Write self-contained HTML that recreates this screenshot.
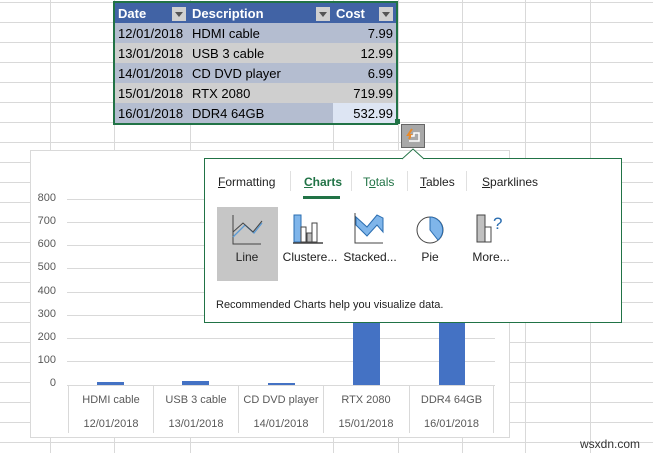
<!DOCTYPE html>
<html><head><meta charset="utf-8"><style>
*{margin:0;padding:0;box-sizing:border-box}
body{width:653px;height:453px;overflow:hidden;background:#fff;font-family:"Liberation Sans",sans-serif;position:relative}
.abs{position:absolute}
.grid{position:absolute;inset:0;background-image:linear-gradient(#d9d9d9 1px,transparent 1px);background-size:100% 20px;background-position:0 2px}
.vl{position:absolute;top:0;bottom:0;width:1px;background:#d9d9d9}
table{border-collapse:collapse;font-size:13px}
td{height:20px;padding:0 3px;white-space:nowrap}
.t{color:#fff;font-weight:bold;background:#4163a5}
.dd{display:inline-block;width:14px;height:14px;background:#d0d0d0;vertical-align:middle;position:relative;float:right;margin-top:1px}
.dd:after{content:"";position:absolute;left:3px;top:5px;border:4px solid transparent;border-top:5px solid #555}
.r1{background:#b4bdd0}.r2{background:#cfcfcf}
.ax{position:absolute;left:30px;width:26px;text-align:right;font-size:11px;color:#595959}
.gl{position:absolute;left:67px;width:428px;height:1px;background:#d9d9d9}
.cat{position:absolute;top:386px;width:85px;height:47px;border-left:1px solid #d9d9d9;text-align:center;font-size:11px;color:#595959}
.tab{position:absolute;top:175px;font-size:12px;color:#222}
.ic{position:absolute;top:212px;width:48px;text-align:center;font-size:12px;color:#222}
</style></head><body>
<div class="grid"></div>
<div class="vl" style="left:50px"></div><div class="vl" style="left:114px"></div><div class="vl" style="left:190px"></div><div class="vl" style="left:333px"></div><div class="vl" style="left:398px"></div><div class="vl" style="left:462px"></div><div class="vl" style="left:525px"></div><div class="vl" style="left:590px"></div>

<div class="abs" style="left:113px;top:1px;width:285px;border:2px solid #217346;background:#fff">
<table style="width:281px">
<tr class="t"><td style="width:74px">Date<span class="dd"></span></td><td style="width:144px">Description<span class="dd"></span></td><td>Cost<span class="dd"></span></td></tr>
<tr class="r1"><td>12/01/2018</td><td>HDMI cable</td><td style="text-align:right">7.99</td></tr>
<tr class="r2"><td>13/01/2018</td><td>USB 3 cable</td><td style="text-align:right">12.99</td></tr>
<tr class="r1"><td>14/01/2018</td><td>CD DVD player</td><td style="text-align:right">6.99</td></tr>
<tr class="r2"><td>15/01/2018</td><td>RTX 2080</td><td style="text-align:right">719.99</td></tr>
<tr class="r1"><td>16/01/2018</td><td>DDR4 64GB</td><td style="text-align:right;background:#dde5f3">532.99</td></tr>
</table></div>
<div class="abs" style="left:395px;top:119px;width:5px;height:5px;background:#217346"></div>

<div class="abs" style="left:30px;top:150px;width:480px;height:288px;background:#fff;border:1px solid #d9d9d9"></div>
<div class="ax" style="top:192px">800</div><div class="ax" style="top:215px">700</div><div class="ax" style="top:238px">600</div><div class="ax" style="top:261px">500</div><div class="ax" style="top:285px">400</div><div class="ax" style="top:308px">300</div><div class="ax" style="top:331px">200</div><div class="ax" style="top:354px">100</div><div class="ax" style="top:377px">0</div>
<div class="gl" style="top:199px"></div><div class="gl" style="top:222px"></div><div class="gl" style="top:245px"></div><div class="gl" style="top:268px"></div><div class="gl" style="top:292px"></div><div class="gl" style="top:315px"></div><div class="gl" style="top:338px"></div><div class="gl" style="top:361px"></div>
<div class="abs" style="left:67px;top:385px;width:428px;height:1px;background:#d9d9d9"></div>
<div class="abs" style="left:97px;top:382px;width:27px;height:3px;background:#4472c4"></div>
<div class="abs" style="left:182px;top:381px;width:27px;height:4px;background:#4472c4"></div>
<div class="abs" style="left:268px;top:383px;width:27px;height:2px;background:#4472c4"></div>
<div class="abs" style="left:353px;top:218px;width:27px;height:167px;background:#4472c4"></div>
<div class="abs" style="left:439px;top:262px;width:26px;height:123px;background:#4472c4"></div>
<div class="cat" style="left:68px"><div style="margin-top:8px">HDMI cable</div><div style="margin-top:12px">12/01/2018</div></div>
<div class="cat" style="left:153px"><div style="margin-top:8px">USB 3 cable</div><div style="margin-top:12px">13/01/2018</div></div>
<div class="cat" style="left:238px"><div style="margin-top:8px">CD DVD player</div><div style="margin-top:12px">14/01/2018</div></div>
<div class="cat" style="left:323px"><div style="margin-top:8px">RTX 2080</div><div style="margin-top:12px">15/01/2018</div></div>
<div class="cat" style="left:409px;border-right:1px solid #d9d9d9"><div style="margin-top:8px">DDR4 64GB</div><div style="margin-top:12px">16/01/2018</div></div>

<div class="abs" style="left:401px;top:124px;width:24px;height:24px;background:#a8a8a8;border:1px solid #666"></div>
<svg class="abs" style="left:401px;top:124px" width="24" height="24"><path d="M11 5 L7 11 L10 11 L8 15" stroke="#e88a2a" stroke-width="2" fill="none"/><path d="M8 17h10v-8h-5v3h-3" stroke="#fff" stroke-width="1.5" fill="none"/></svg>

<div class="abs" style="left:204px;top:158px;width:418px;height:165px;background:#fff;border:1px solid #217346"></div>
<svg class="abs" style="left:402px;top:148px" width="24" height="12"><path d="M0 11 L11 1 L22 11" fill="#fff" stroke="#217346"/><rect x="1" y="10.5" width="20" height="2" fill="#fff"/></svg>
<div class="tab" style="left:218px"><u>F</u>ormatting</div>
<div class="tab" style="left:304px;color:#217346;font-weight:bold"><u>C</u>harts</div>
<div class="abs" style="left:303px;top:196px;width:37px;height:3px;background:#217346"></div>
<div class="tab" style="left:363px;color:#217346">T<u>o</u>tals</div>
<div class="tab" style="left:420px"><u>T</u>ables</div>
<div class="tab" style="left:482px"><u>S</u>parklines</div>
<div class="abs" style="left:290px;top:171px;width:1px;height:20px;background:#e0e0e0"></div>
<div class="abs" style="left:351px;top:171px;width:1px;height:20px;background:#e0e0e0"></div>
<div class="abs" style="left:407px;top:171px;width:1px;height:20px;background:#e0e0e0"></div>
<div class="abs" style="left:466px;top:171px;width:1px;height:20px;background:#e0e0e0"></div>
<div class="abs" style="left:217px;top:207px;width:61px;height:74px;background:#c6c6c6"></div>
<svg class="abs" style="left:210px;top:205px" width="310" height="40">
<path d="M23 10v29h28" stroke="#444" fill="none"/><path d="M23 32l12-12 9 8 8-10" stroke="#5b9bd5" stroke-width="1.3" fill="none"/><path d="M23 27l10-9 10 9 9-11" stroke="#444" fill="none"/>
<rect x="84" y="10" width="7" height="27" fill="#7fb5ea" stroke="#2a6db0"/><rect x="91" y="22" width="5" height="15" fill="#fff" stroke="#444"/><rect x="97" y="28" width="5" height="9" fill="#bbb" stroke="#444"/><rect x="102" y="18" width="5" height="19" fill="#fff" stroke="#444"/><path d="M83 38h30" stroke="#444" stroke-width="1.5"/>
<path d="M146 12L157 22L167 10L173 13V27L167 20L157 31L146 20Z" fill="#7fb5ea" stroke="#2a6db0"/><path d="M145 8v30h28" stroke="#444" fill="none"/>
<circle cx="220" cy="25" r="13" fill="#fff" stroke="#444"/><path d="M220 25v-13a13 13 0 0 1 8 23z" fill="#7fb5ea" stroke="#2a6db0"/>
<rect x="267" y="10" width="8" height="27" fill="#c0c0c0" stroke="#444"/><rect x="275" y="22" width="6" height="15" fill="#fff" stroke="#444"/>
<text x="283" y="24" font-size="17" fill="#2a6db0" font-family="Liberation Sans">?</text>
</svg>
<div class="ic" style="left:223px;top:250px">Line</div>
<div class="ic" style="left:280px;top:250px;width:60px">Clustere...</div>
<div class="ic" style="left:340px;top:250px;width:60px">Stacked...</div>
<div class="ic" style="left:406px;top:250px">Pie</div>
<div class="ic" style="left:467px;top:250px">More...</div>
<div class="abs" style="left:216px;top:299px;font-size:11px;color:#222">Recommended Charts help you visualize data.</div>
<div class="abs" style="left:580px;top:437px;font-size:12px;color:#333">wsxdn.com</div>
</body></html>
